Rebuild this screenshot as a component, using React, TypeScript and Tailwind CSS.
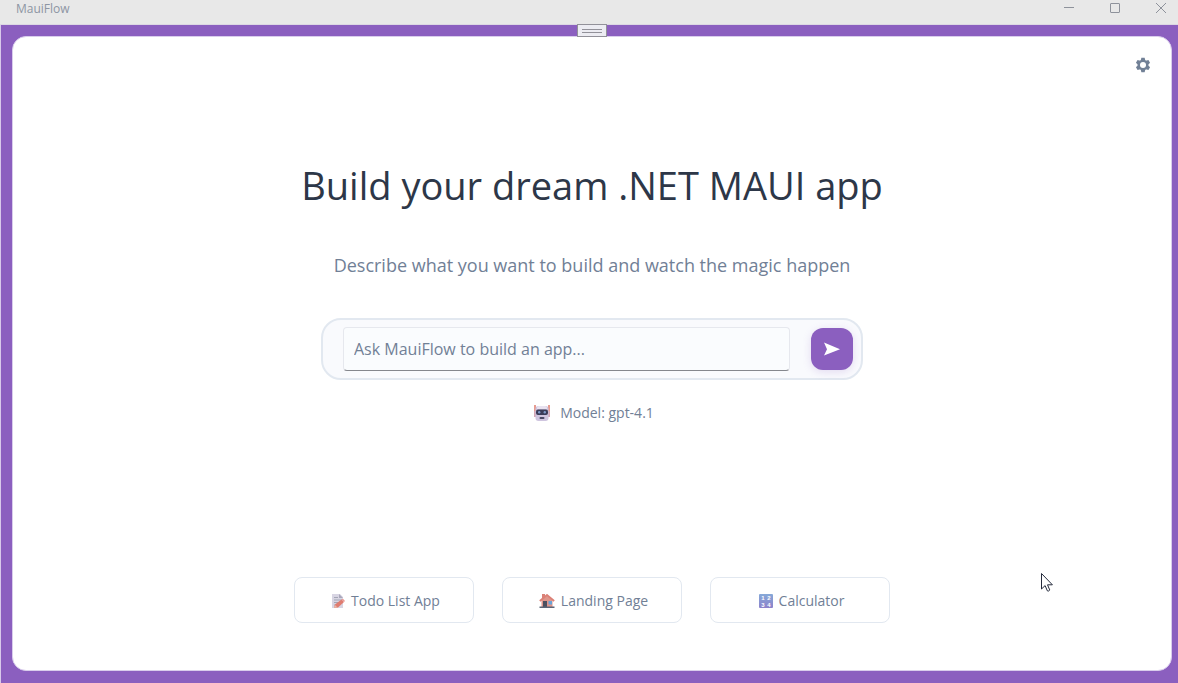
import type { ReactNode } from "react";

function RobotIcon() {
  return (
    <svg className="size-4" viewBox="0 0 16 16" aria-hidden="true">
      <path d="M0 0h2v8H0zM14 0h2v8h-2z" fill="#e79c90" />
      <path d="M0 6h3v6H0zM13 6h3v6h-3z" fill="#d3a7b5" />
      <rect x="1.5" y="1" width="13" height="15" rx="3" fill="#cfc5df" />
      <path d="M3 3a2 2 0 0 1 2-2h6a2 2 0 0 1 2 2v1H3z" fill="#e8e2f0" />
      <rect x="2" y="4.5" width="12" height="5.5" rx="2" fill="#3a3c58" />
      <circle cx="5.2" cy="7.2" r="1.2" fill="#7f9ac8" />
      <circle cx="10.8" cy="7.2" r="1.2" fill="#7f9ac8" />
      <rect x="5.5" y="12" width="5" height="2" rx="1" fill="#4a4965" />
    </svg>
  );
}

function MemoIcon() {
  return (
    <svg className="size-3.5" viewBox="0 0 14 14" aria-hidden="true">
      <path d="M1 0h8l3 3v11H1z" fill="#d8d5e3" />
      <path d="M8 0l4 4H8z" fill="#aaa8bb" />
      <path d="M3 3.5h4M3 6h8M3 8.5h5M3 11h2" stroke="#a3a6b5" />
      <path d="M3 14l1-3.5L10.5 5.5l2.5 2.5L7 13.5z" fill="#df7c70" />
      <path d="M10.5 5.5l1.5-.8L14 7l-1 1z" fill="#e99a93" />
      <path d="M3 14l1-3 2.5 2.5z" fill="#eab6a5" />
    </svg>
  );
}

function HouseIcon() {
  return (
    <svg className="h-3.5 w-4" viewBox="0 0 16 14" aria-hidden="true">
      <path d="M3 0h3v5H3z" fill="#d98278" />
      <path d="M2.5 6L8 1.5 13.5 6v7h-11z" fill="#df968b" />
      <path d="M.8 7L8 1l7.2 6" fill="none" stroke="#dc8076" strokeWidth="1.8" />
      <path d="M4 7h4v6H4z" fill="#4b5060" />
      <path d="M9.5 7H13v3.5H9.5z" fill="#68a3d8" />
      <path d="M.5 12.5h15V14H.5z" fill="#5b6577" />
    </svg>
  );
}

function NumbersIcon() {
  return (
    <svg className="size-3.5" viewBox="0 0 28 28" aria-hidden="true">
      <defs>
        <linearGradient id="numbers-fill" x1="0" y1="0" x2="0" y2="1">
          <stop stopColor="#86a9d8" />
          <stop offset="1" stopColor="#8c82cb" />
        </linearGradient>
      </defs>
      <rect width="28" height="28" rx="2" fill="url(#numbers-fill)" />
      <g fill="#fff" fontFamily="'Liberation Sans', sans-serif" fontSize="12" fontWeight="700" textAnchor="middle">
        <text x="8" y="12">1</text>
        <text x="20" y="12">2</text>
        <text x="8" y="25">3</text>
        <text x="20" y="25">4</text>
      </g>
    </svg>
  );
}

function GearIcon() {
  return (
    <svg className="size-4" viewBox="-8 -8 16 16" fill="#718096" aria-hidden="true">
      <mask id="gear-hole">
        <rect x="-8" y="-8" width="16" height="16" fill="#fff" />
        <circle r="3" fill="#000" />
      </mask>
      <g mask="url(#gear-hole)">
        <circle r="5.4" />
        {[0, 60, 120, 180, 240, 300].map((angle) => (
          <path key={angle} d="M-2.3-4.5L-1.6-7.2h3.2L2.3-4.5z" transform={`rotate(${angle})`} />
        ))}
      </g>
    </svg>
  );
}

function WindowButton({ label, children }: { label: string; children: ReactNode }) {
  return (
    <button type="button" aria-label={label} className="flex h-4 w-[46px] items-center justify-center">
      <svg className="size-3" viewBox="0 0 12 12" fill="none" stroke="#8e929b" aria-hidden="true">
        {children}
      </svg>
    </button>
  );
}

const suggestions = [
  { label: "Todo List App", icon: <MemoIcon /> },
  { label: "Landing Page", icon: <HouseIcon /> },
  { label: "Calculator", icon: <NumbersIcon /> },
];

export default function App() {
  return (
    <div className="relative flex min-h-screen flex-col bg-[#8b5fbf] font-['Open_Sans','Noto_Sans',sans-serif] text-[#718096]">
      <header className="flex h-[25px] shrink-0 items-start justify-between border-b border-[#dcd8e3] bg-[#e8e8e8] pl-4">
        <span className="text-xs leading-[18px] text-[#8d95a3]">MauiFlow</span>
        <div className="-mr-1.5 flex">
          <WindowButton label="Minimize">
            <path d="M1 5.5h10" />
          </WindowButton>
          <WindowButton label="Maximize">
            <rect x="1.5" y="1.5" width="9" height="9" rx="0.5" />
          </WindowButton>
          <WindowButton label="Close">
            <path d="M1 1l10 10M11 1L1 11" />
          </WindowButton>
        </div>
      </header>

      <button
        type="button"
        aria-label="Toggle toolbar"
        className="absolute top-6 left-1/2 ml-[-12px] flex h-[13px] w-[30px] flex-col items-center justify-center gap-0.5 border border-[#929199] bg-[#ececf2]"
      >
        <span className="h-px w-5 bg-[#929199]" />
        <span className="h-px w-5 bg-[#929199]" />
      </button>

      <div className="flex grow border-l border-[#d8c9ea] pt-[11px] pr-1.5 pb-3 pl-[11px]">
        <main className="flex grow flex-col items-center rounded-[14px] border border-[#d9cdec] bg-white">
          <button type="button" aria-label="Settings" className="mt-5 mr-5 self-end">
            <GearIcon />
          </button>

          <h1 className="mt-[84px] text-[38px] leading-[56px] text-[#2d3748]">Build your dream .NET MAUI app</h1>
          <p className="mt-10 text-lg leading-6">Describe what you want to build and watch the magic happen</p>

          <form
            className="mt-[41px] flex w-full max-w-[542px] items-center gap-[21px] rounded-[20px] border-2 border-[#e2e8f0] bg-[#f9fafd] py-[7px] pr-2 pl-5"
            onSubmit={(event) => event.preventDefault()}
          >
            <input
              type="text"
              aria-label="App description"
              placeholder="Ask MauiFlow to build an app..."
              className="h-11 min-w-0 grow rounded border border-[#e6e8ee] border-b-[#85878d] bg-[#fafcfe] px-2.5 text-base outline-none placeholder:text-[#718096]"
            />
            <button
              type="submit"
              aria-label="Send"
              className="flex size-[42px] shrink-0 items-center justify-center rounded-xl bg-[#8b5fbf] shadow-[0_2px_8px_rgba(139,95,191,0.2)]"
            >
              <svg className="size-4" viewBox="0 0 16 16" fill="#fff" aria-hidden="true">
                <path d="M0 1.5L16 8.2 0 14.5 3 8.2z" />
              </svg>
            </button>
          </form>

          <div className="mt-[21px] flex items-center gap-2.5 pl-1 text-sm leading-6">
            <RobotIcon />
            <span>Model: gpt-4.1</span>
          </div>

          <div className="mt-auto mb-[47px] flex flex-wrap justify-center gap-7">
            {suggestions.map(({ label, icon }) => (
              <button
                key={label}
                type="button"
                className="flex h-[46px] w-[180px] items-center justify-center gap-1.5 rounded-lg border border-[#e2e8f0] bg-white pt-0.5 pl-[3px] text-sm"
              >
                {icon}
                <span>{label}</span>
              </button>
            ))}
          </div>
        </main>
      </div>

      <svg className="pointer-events-none absolute top-[572px] left-[1040px] h-5 w-3.5" viewBox="0 0 14 20" aria-hidden="true">
        <path
          d="M1.5 1.5v15.5l3.6-3.4 2.3 5.3c1 .5 2-.1 2.3-1L7.5 12.8h4.9z"
          fill="#fff"
          stroke="#252b3c"
          strokeLinejoin="round"
        />
      </svg>
    </div>
  );
}
